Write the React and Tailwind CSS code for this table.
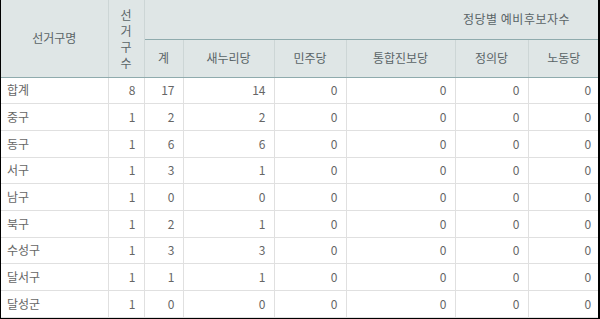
const parties = ['계', '새누리당', '민주당', '통합진보당', '정의당', '노동당']
const colWidths = ['w-[107px]', 'w-[36px]', 'w-[39px]', 'w-[91px]', 'w-[72px]', 'w-[109px]', 'w-[73px]', 'w-[71px]']

const rows = [
  { name: '합계', seats: 8, v: [17, 14, 0, 0, 0, 0], h: 'h-[26px]' },
  { name: '중구', seats: 1, v: [2, 2, 0, 0, 0, 0], h: 'h-[27px]' },
  { name: '동구', seats: 1, v: [6, 6, 0, 0, 0, 0], h: 'h-[27px]' },
  { name: '서구', seats: 1, v: [3, 1, 0, 0, 0, 0], h: 'h-[26px]' },
  { name: '남구', seats: 1, v: [0, 0, 0, 0, 0, 0], h: 'h-[27px]' },
  { name: '북구', seats: 1, v: [2, 1, 0, 0, 0, 0], h: 'h-[27px]' },
  { name: '수성구', seats: 1, v: [3, 3, 0, 0, 0, 0], h: 'h-[26px]' },
  { name: '달서구', seats: 1, v: [1, 1, 0, 0, 0, 0], h: 'h-[27px]' },
  { name: '달성군', seats: 1, v: [0, 0, 0, 0, 0, 0], h: 'h-[27px]' },
]

export default function App() {
  return (
    <div className="w-[600px] h-[319px] overflow-hidden bg-white font-['Noto_Sans_CJK_KR','Noto_Sans',sans-serif] text-[12px] text-[#666]">
      <div className="w-[600px] h-[319px] border-l border-r-2 border-b border-black overflow-hidden">
        <table className="border-collapse table-fixed w-[597px]">
          <colgroup>
            {colWidths.map((w, i) => (
              <col key={i} className={w} />
            ))}
          </colgroup>
          <thead>
            <tr className="h-[39px] bg-[#dfe6e6] text-[#5a6466]">
              <th rowSpan={2} className="font-normal text-center border-r border-[#cdd6d6] border-b border-b-[#8fabad]">
                선거구명
              </th>
              <th rowSpan={2} className="font-normal text-center leading-[16px] border-r border-[#cdd6d6] border-b border-b-[#8fabad]">
                <div className="flex flex-col items-center pt-[1px]">
                  <span>선</span>
                  <span>거</span>
                  <span>구</span>
                  <span>수</span>
                </div>
              </th>
              <th colSpan={6} className="font-normal text-right pr-[29px] tracking-[0.5px] border-b border-[#8fabad]">
                정당별 예비후보자수
              </th>
            </tr>
            <tr className="h-[38px] bg-[#dfe6e6] text-[#5a6466]">
              {parties.map((p, i) => (
                <th
                  key={p}
                  className={`font-normal text-center border-b border-b-[#8fabad] ${i < parties.length - 1 ? 'border-r border-r-[#cdd6d6]' : ''}`}
                >
                  {p}
                </th>
              ))}
            </tr>
          </thead>
          <tbody>
            {rows.map((r) => (
              <tr key={r.name} className={r.h}>
                <td className="pl-[6px] text-left border-r border-b border-[#e0e0e0]">{r.name}</td>
                <td className="pr-[8px] text-right border-r border-b border-[#e0e0e0]">{r.seats}</td>
                {r.v.map((n, i) => (
                  <td
                    key={i}
                    className={`pr-[8px] text-right border-b border-[#e0e0e0] ${i < r.v.length - 1 ? 'border-r' : ''}`}
                  >
                    {n}
                  </td>
                ))}
              </tr>
            ))}
          </tbody>
        </table>
      </div>
    </div>
  )
}
